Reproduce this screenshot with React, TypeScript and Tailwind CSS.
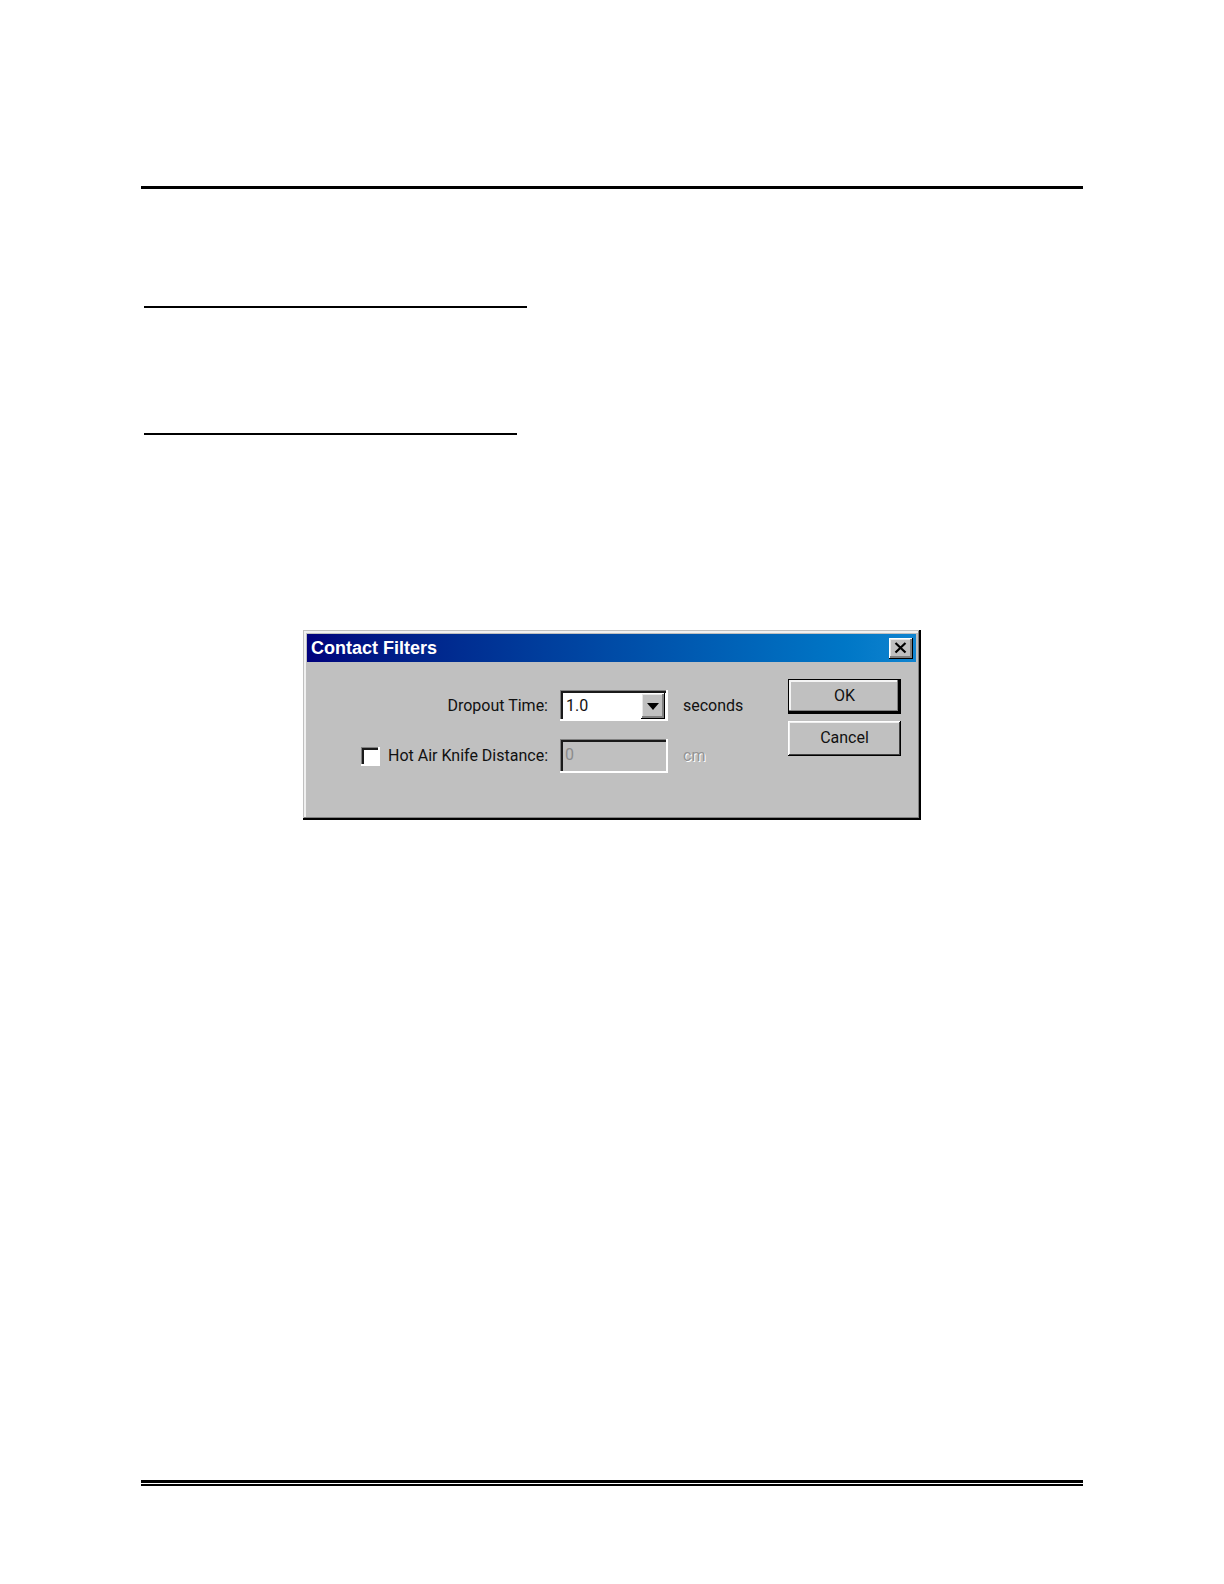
import React, { useState } from 'react';

const DROPOUT_TIMES = ['0.5', '1.0', '1.5', '2.0', '5.0'];

// Bevels shared by the dialog's controls
const SUNKEN = 'shadow-[inset_-2px_-2px_0_#fff,inset_1px_1px_0_#808080,inset_3px_3px_0_#1a1a1a]';
const RAISED = 'shadow-[inset_-1px_-1px_0_#000,inset_1px_1px_0_#fff,inset_-3px_-3px_0_#808080,inset_2px_2px_0_#e6e6e6]';

interface DialogButtonProps {
  label: string;
  isDefault?: boolean;
}

const DialogButton: React.FC<DialogButtonProps> = ({ label, isDefault }) => (
  <button
    type="button"
    className={`h-[35px] w-[113px] pb-0.5 text-center ${
      isDefault
        ? 'shadow-[inset_-3px_-3px_0_#000,inset_1px_1px_0_#000,inset_-4px_-4px_0_#808080,inset_3px_3px_0_#f4f4f4]'
        : 'shadow-[inset_-1px_-1px_0_#000,inset_1px_1px_0_#fff,inset_-2px_-2px_0_#404040,inset_2px_2px_0_#f0f0f0]'
    }`}
  >
    {label}
  </button>
);

const ContactFiltersDialog: React.FC = () => {
  const [dropout, setDropout] = useState('1.0');
  const [knifeEnabled, setKnifeEnabled] = useState(false);
  const [distance, setDistance] = useState('0');

  return (
    <section
      role="dialog"
      aria-labelledby="dialog-title"
      className="mx-auto w-full max-w-[618px] bg-[#c0c0c0] p-1 pr-[5px] font-['Roboto',sans-serif] text-[16px] leading-5 text-[#111] shadow-[inset_-2px_-2px_0_#000,inset_1px_1px_0_#c0c0c0,inset_-3px_-3px_0_#808080,inset_3px_3px_0_#f0f0f0]"
    >
      <header className="flex h-7 items-center justify-between bg-linear-to-r from-[#00007c] to-[#1084d0] px-1 pr-[3px]">
        <h1 id="dialog-title" className="font-['Liberation_Sans',sans-serif] text-[18px] font-bold text-white">Contact Filters</h1>
        <button
          type="button"
          aria-label="Close"
          className={`flex h-[21px] w-6 items-center justify-center bg-[#c0c0c0] ${RAISED}`}
        >
          <svg width="14" height="12" viewBox="0 0 14 12" fill="none" stroke="#000" strokeWidth="2.2">
            <path d="M1.5 1l10 9.5M11.5 1l-10 9.5" />
          </svg>
        </button>
      </header>

      <form className="flex items-start justify-between pb-[43px] pr-[15px]">
        <div className="grid grow grid-cols-[253px_108px_1fr] items-center gap-y-[18px] pt-7">
          <label htmlFor="dropout" className="pr-3 text-right">Dropout Time:</label>
          <div className="relative">
            <select
              id="dropout"
              value={dropout}
              onChange={(e) => setDropout(e.target.value)}
              className={`block h-[31px] w-full appearance-none bg-white pl-[6px] ${SUNKEN}`}
            >
              {DROPOUT_TIMES.map((t) => (
                <option key={t} value={t}>{t}</option>
              ))}
            </select>
            <span className={`pointer-events-none absolute top-[3px] right-[3px] flex h-[26px] w-6 items-center justify-center bg-[#c0c0c0] ${RAISED}`}>
              <svg width="12" height="7" viewBox="0 0 12 7" fill="#000">
                <path d="M0 0h12L6 7z" />
              </svg>
            </span>
          </div>
          <span className="pl-[15px]">seconds</span>

          <div className="flex items-center justify-end pr-3">
            <input
              id="knife"
              type="checkbox"
              checked={knifeEnabled}
              onChange={(e) => setKnifeEnabled(e.target.checked)}
              className={`mr-2 size-[19px] appearance-none bg-white checked:bg-[#404040] ${SUNKEN}`}
            />
            <label htmlFor="knife">Hot Air Knife Distance:</label>
          </div>
          <input
            type="text"
            aria-label="Hot air knife distance"
            value={distance}
            disabled={!knifeEnabled}
            onChange={(e) => setDistance(e.target.value)}
            className={`h-[34px] w-full pb-1 pl-[5px] disabled:text-[#8c8c8c] ${SUNKEN}`}
          />
          <span className={`pl-[15px] ${knifeEnabled ? '' : 'text-[#949494] [text-shadow:1px_1px_0_#fff]'}`}>cm</span>
        </div>

        <div className="flex flex-col gap-[7px] pt-[17px]">
          <DialogButton label="OK" isDefault />
          <DialogButton label="Cancel" />
        </div>
      </form>
    </section>
  );
};

const App: React.FC = () => (
  <main className="min-h-screen bg-white px-[141px] pt-[186px] pb-[98px]">
    <hr className="border-0 border-t-3 border-black" />

    {/* Section rules */}
    <hr className="mt-[117px] ml-[3px] w-[383px] border-0 border-t-2 border-black" />
    <hr className="mt-[125px] ml-[3px] w-[373px] border-0 border-t-2 border-black" />

    <div className="mt-[195px]">
      <ContactFiltersDialog />
    </div>

    {/* Footer double rule */}
    <footer className="mt-[660px] h-[6px] border-t-3 border-b-2 border-black" />
  </main>
);

export default App;
